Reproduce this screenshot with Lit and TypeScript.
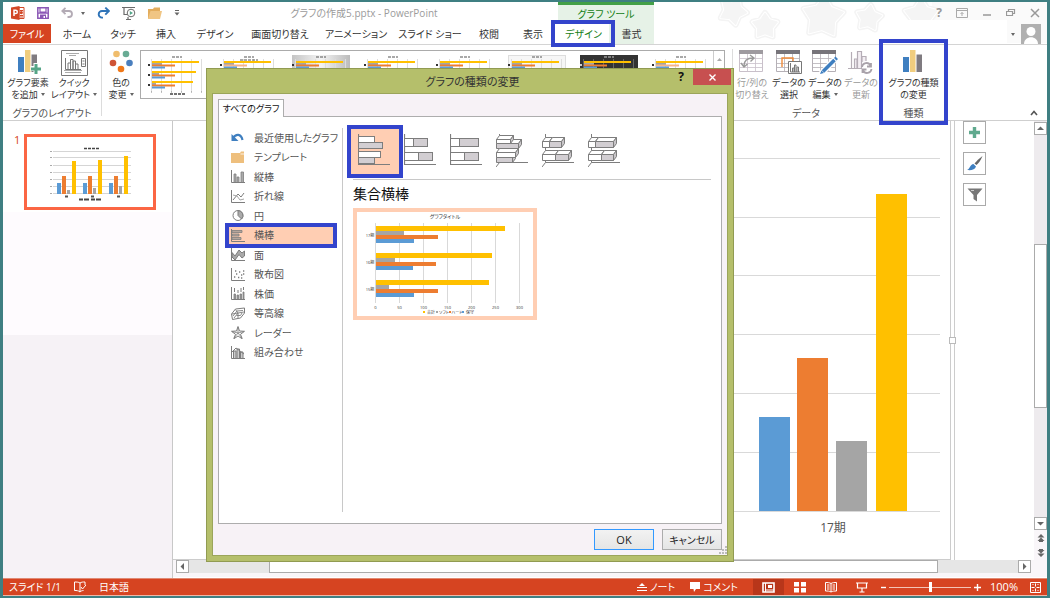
import { LitElement, html, svg, css } from "lit";
import { customElement, state } from "lit/decorators.js";
import { classMap } from "lit/directives/class-map.js";

const BLUE = "#5b9bd5";
const ORANGE = "#ed7d31";
const GRAY = "#a5a5a5";
const GOLD = "#ffc000";
const LINE = "#7d7d7d";

const star = (x: number, y: number, r: number, turn: number) => {
  const pts: string[] = [];
  for (let i = 0; i < 10; i++) {
    const a = ((turn + i * 36) * Math.PI) / 180;
    const q = i % 2 ? r * 0.6 : r;
    pts.push(`${(x + q * Math.sin(a)).toFixed(1)},${(y - q * Math.cos(a)).toFixed(1)}`);
  }
  return svg`<polygon points=${pts.join(" ")} fill="none" stroke="#f4f4f4" stroke-width="6" stroke-linejoin="round"/>
    <polygon points=${pts.join(" ")} fill="#f6f6f6" stroke="#fff" stroke-width="3" stroke-linejoin="round"/>
    <polygon points=${pts.join(" ")} fill="#f5f5f5" stroke="#f5f5f5" stroke-width="1" stroke-linejoin="round"/>`;
};

/* ---------- quick access and window icons ---------- */
const pptIcon = html`<svg width="14" height="14" viewBox="0 0 14 14"><path d="M8 1.5h5v11H8z" fill="#fff" stroke="#d24726"/><path d="M9 4.5h3M9 9.5h3M9 11h3" stroke="#d24726"/><circle cx="10.3" cy="6.6" r="1.6" fill="#d24726"/><path d="M0 1.5 8.5 0v14L0 12.5z" fill="#d24726"/><path d="M3 10V4.2h1.6a1.6 1.6 0 0 1 0 3.4H3" fill="none" stroke="#fff" stroke-width="1.5"/></svg>`;
const saveIcon = html`<svg width="12" height="12" viewBox="0 0 12 12"><path d="M.8.8h10.4v10.4H.8z" fill="#fff" stroke="#8a57b5" stroke-width="1.5"/><path d="M3 1v4h6V1M1 6.2h10" fill="none" stroke="#8a57b5" stroke-width="1.2"/><path d="M3 7.5h6V12H3z" fill="#8a57b5"/><path d="M6.5 9H8v2H6.5z" fill="#fff"/></svg>`;
const undoIcon = html`<svg width="12" height="12" viewBox="0 0 12 12"><path d="M1 4h7a3 3 0 0 1 0 6H6.5M4.5.8 1.2 4l3.3 3.2" fill="none" stroke="#b3abb5" stroke-width="1.8"/></svg>`;
const redoIcon = html`<svg width="13" height="12" viewBox="0 0 13 12"><path d="M11 4H5a3.3 3.3 0 0 0 0 6.6h1M8.3.6 12 4 8.3 7.6" fill="none" stroke="#2f74b8" stroke-width="1.9"/></svg>`;
const showIcon = html`<svg width="14" height="14" viewBox="0 0 14 14"><path d="M0 1.5h13M2 1.5v7h4M6 11v2M4 13.5h5" fill="none" stroke="#6a6a6a" stroke-width="1.2"/><circle cx="9" cy="7" r="3.8" fill="#fff" stroke="#6a6a6a"/><path d="M7.8 5v4L11 7z" fill="#52a588"/></svg>`;
const folderIcon = html`<svg width="14" height="12" viewBox="0 0 14 12"><path d="M0 12V2h5l1-1.5h6V4" fill="#e3ad5d"/><path d="M0 12 2.5 4H14l-2 8z" fill="#f0c583"/></svg>`;
const moreIcon = html`<svg width="6" height="6" viewBox="0 0 6 6"><path d="M1 .5h4" stroke="#666"/><path d="M.5 2.5h5L3 5.5z" fill="#666"/></svg>`;

/* ---------- ribbon icons ---------- */
const barsIcon = (plus: boolean) => html`<svg width="25" height="24" viewBox="0 0 25 24"><path d="M2 7h6v15H2z" fill="#3f7fc0"/><path d="M9 0h5.5v22H9z" fill="#f0cd7e"/><path d="M15.5 4.5H21V22h-5.5z" fill="#7f7b80"/>${plus ? svg`<path d="M20 13v11M14.5 18.5h11" stroke="#fff" stroke-width="5"/><path d="M20 14v10M15 19h10" stroke="#55a587" stroke-width="3"/>` : ""}</svg>`;
const quickIcon = html`<svg width="27" height="26" viewBox="0 0 27 26"><path d="M.5.5h26v25H.5z" fill="#fff" stroke="#777"/><path d="M5 3.5h13M8 5.5h7M4 22.5h16M3 20.5h18" stroke="#aaa"/><path d="M4.5 8v11.5H20M7 19v-6h2.5v6M9.5 19V9.5H12V19M12 19v-8h2.5v8M14.5 19v-5H17v5" fill="none" stroke="#777"/><path d="M20.5 8.5h4v8h-4z" fill="none" stroke="#777"/><path d="M21.5 11h2M21.5 14h2" stroke="#777"/></svg>`;
const colorIcon = html`<svg width="24" height="24" viewBox="0 0 24 24"><circle cx="7.5" cy="4" r="3.3" fill="#f0bd6c"/><circle cx="17" cy="4" r="3.3" fill="#68ab94"/><circle cx="4" cy="13" r="3.3" fill="#cf5436"/><circle cx="20.5" cy="13" r="3.3" fill="#4a7fbe"/><circle cx="12" cy="19" r="3.3" fill="#f07818"/></svg>`;
const gridBase = (c: string, head: string) => svg`<path d="M.5.5h23v21H.5z" fill="#fff" stroke=${c}/><path d="M0 0h24v4H0z" fill=${head}/><path d="M0 8.5h24M0 13.5h24M0 17.5h24M8.5 4v18M16.5 4v18" stroke=${c} stroke-width=".8"/>`;
const swapIcon = html`<svg width="26" height="24" viewBox="0 0 26 24">${gridBase("#c9c0ca", "#9e9a9f")}<path d="M5 16c0-6 3-8 9-8M11 5l4 3-3.5 3.5M2 13l3 4 3.5-3" fill="none" stroke="#999" stroke-width="1.4"/></svg>`;
const selectIcon = html`<svg width="26" height="24" viewBox="0 0 26 24">${gridBase("#b5b0b6", "#77747a")}<path d="M6 17V8h11v4" fill="none" stroke="#ef8b3a" stroke-width="1.4"/><path d="M12.5 11.5h13v12h-13z" fill="#fff" stroke="#777"/><path d="M14.5 13v9H24M16.5 22v-4H18v4M18.5 22v-7H20v7M21 22v-5h1.5v5" fill="none" stroke="#777"/></svg>`;
const editIcon = html`<svg width="26" height="24" viewBox="0 0 26 24">${gridBase("#b5b0b6", "#77747a")}<path d="M9 24 24 8" stroke="#fff" stroke-width="6"/><path d="M11 21.5 22.5 10" stroke="#3f7fc0" stroke-width="3.6"/><path d="m22 8 1.5-1.5L26 9l-1.500 1.500zM9.500 20.500 12 23l-4 1z" fill="#3f7fc0"/></svg>`;
const refreshIcon = html`<svg width="26" height="24" viewBox="0 0 26 24"><path d="M3.5 2v17M0 18.5h14M6.5 18V9H9v9M9.5 18V1.5h4V18M14 12V6.5h4V11" fill="#f3eef3" stroke="#b5adb6" stroke-width="1.2"/><path d="M14 17a4.5 4.5 0 0 1 8.5-1.5M23 13v3.5h-4M23.5 19a4.5 4.5 0 0 1-8.500 1.500M14.500 23v-3.500h4" fill="none" stroke="#a9a2aa" stroke-width="1.8"/></svg>`;

/* ---------- chart type list icons ---------- */
const axis = svg`<path d="M.5 0v12.500H14" fill="none" stroke=${LINE}/>`;
const small = (body: unknown) => html`<svg width="14" height="13" viewBox="0 0 14 13">${body}</svg>`;
const chartTypes: { name: string; icon: unknown }[] = [
  { name: "最近使用したグラフ", icon: small(svg`<path d="M2 7C5 2.500 10 2.500 11.500 9" fill="none" stroke="#3f7fc0" stroke-width="2.200"/><path d="M.5 3v7h7z" fill="#3f7fc0"/>`) },
  { name: "テンプレート", icon: small(svg`<path d="M0 12V2h9l1-1.500h3V12z" fill="#eebf7d"/><path d="M9.500 3H13" stroke="#fff" stroke-width=".8"/>`) },
  { name: "縦棒", icon: small(svg`${axis}<path d="M3 12V4h2v8M6 12V7h2v5M10 12V2h2.500v10" fill="#aaa" stroke=${LINE} stroke-width=".8"/>`) },
  { name: "折れ線", icon: small(svg`${axis}<path d="m2 10 5-6 3 3 3-4" fill="none" stroke=${LINE}/><path d="m2 5 4 1 3 4 4-1" fill="none" stroke="#a5a5a5"/>`) },
  { name: "円", icon: small(svg`<circle cx="7" cy="6.500" r="5" fill="#fff" stroke=${LINE}/><path d="M7 6.500v-5a5 5 0 0 1 3.500 8.500z" fill="#aaa" stroke=${LINE}/>`) },
  { name: "横棒", icon: small(svg`${axis}<path d="M1 1.500h10v2H1zM1 5h7v2H1zM1 8.500h9v2H1z" fill="#b5a59c" stroke=${LINE} stroke-width=".8"/>`) },
  { name: "面", icon: small(svg`<path d="M.5 0v12.500H14" fill="none" stroke=${LINE}/><path d="M1 4.500 4 8l4-6 3 3 2.500-2v5L11 10 8 6.500 4 12 1 9z" fill="#aaa" stroke=${LINE}/>`) },
  { name: "散布図", icon: small(svg`${axis}<path d="M3 9h1.300M5 6h1.300M7 9.500h1.300M8 4h1.300M10 7h1.300M12 3h1.300M4 3h1.300M10 10h1.300M12 6h1.300" stroke=${LINE} stroke-width="1.300"/>`) },
  { name: "株価", icon: small(svg`${axis}<path d="M3 12V7h1.500v5M6 12V8h1.500v4M9 12V7h1.500v5M12 12V5h1v7" fill="#999" stroke=${LINE} stroke-width=".8"/><path d="M3.500 1v4M7 3v3M10 1v4M12.500 0v3" stroke=${LINE}/>`) },
  { name: "等高線", icon: small(svg`<path d="m.5 7 4-5 9-1v5l-4 5-8 1.500z" fill="#fff" stroke=${LINE}/><path d="m2 9 4-5 6-.5M3 11l4-5 6-1M5.500 8.500h4L11 6M1 7l6-1M7 6v5M4.500 2.500 7 6" fill="none" stroke=${LINE} stroke-width=".9"/>`) },
  { name: "レーダー", icon: small(svg`<path d="m7 .5 1.500 4.500 5 .3-4 3 1.700 4.500L7 10l-4.200 2.800L4.500 8.300l-4-3 5-.3z" fill="#fff" stroke=${LINE}/><path d="M7 1v6l6-1.500M7 7l4 5M7 7l-4 5M7 7 1 5.500" fill="none" stroke=${LINE} stroke-width=".8"/>`) },
  { name: "組み合わせ", icon: small(svg`${axis}<path d="M2.500 12V5H5v7M6 12V3h2.500v9M9.500 12V6H12v6" fill="#ccc" stroke=${LINE}/><path d="m1 6 4-4 4 3 4 3" fill="none" stroke=${LINE}/>`) },
];

/* ---------- horizontal bar subtypes ---------- */
const slab = (x: number, y: number, w: number, h: number, fill: string) =>
  svg`<path d=${`M${x} ${y}h${w}v${h}h${-w}z`} fill=${fill} stroke=${LINE}/><path d=${`M${x} ${y}l3-4h${w}l-3 4z`} fill="#fff" stroke=${LINE} stroke-linejoin="round"/><path d=${`M${x + w} ${y}l3-4v${h}l-3 4z`} fill="#c8c5c8" stroke=${LINE} stroke-linejoin="round"/>`;
const rect = (x: number, y: number, w: number, h: number, fill: string) =>
  svg`<rect x=${x} y=${y} width=${w} height=${h} fill=${fill} stroke=${LINE}/>`;
const axes2 = svg`<path d="M.5 0v30.500H32" fill="none" stroke=${LINE} stroke-width="1.200"/>`;
const axes3 = svg`<path d="M3.500 0v28.500H32M3.500 28.500 0 33" fill="none" stroke=${LINE}/>`;
const G = "#d2ced2";
const subtypes: { name: string; body: unknown }[] = [
  { name: "集合横棒", body: svg`${axes2}${rect(0.5, 2.5, 16, 6, "#fff")}${rect(0.5, 8.5, 24, 6, G)}${rect(0.5, 17.5, 22, 6, "#fff")}${rect(0.5, 23.5, 16, 6, G)}` },
  { name: "積み上げ横棒", body: svg`${axes2}${rect(0.5, 4.5, 9, 8, "#fff")}${rect(9.5, 4.5, 14, 8, G)}${rect(0.5, 18.5, 14, 8, "#fff")}${rect(14.5, 18.5, 14, 8, G)}` },
  { name: "100% 積み上げ横棒", body: svg`${axes2}${rect(0.5, 4.5, 9, 8, "#fff")}${rect(9.5, 4.5, 19, 8, G)}${rect(0.5, 18.5, 14, 8, "#fff")}${rect(14.5, 18.5, 14, 8, G)}` },
  { name: "3-D 集合横棒", body: svg`${axes3}${slab(0.5, 9.5, 22, 5, G)}${slab(0.5, 5.5, 14, 4, "#fff")}${slab(0.5, 23.5, 16, 5, G)}${slab(0.5, 18.5, 19, 5, "#fff")}` },
  { name: "3-D 積み上げ横棒", body: svg`${axes3}${slab(0.5, 7.5, 7, 6, "#fff")}${slab(7.5, 7.5, 12, 6, G)}${slab(0.5, 20.5, 13, 6, "#fff")}${slab(13.5, 20.5, 13, 6, G)}` },
  { name: "3-D 100% 積み上げ横棒", body: svg`${axes3}${slab(0.5, 7.5, 7, 6, "#fff")}${slab(7.5, 7.5, 18, 6, G)}${slab(0.5, 20.5, 13, 6, "#fff")}${slab(13.5, 20.5, 12, 6, G)}` },
];

/* ---------- charts ---------- */
const periods = [
  { name: "17期", v: [38, 62, 28, 129] },
  { name: "16期", v: [37, 60, 19, 116] },
  { name: "15期", v: [38, 62, 13, 113] },
];
const colors = [BLUE, ORANGE, GRAY, GOLD];

const preview = html`<svg width="176" height="104" viewBox="0 0 176 104" role="img" aria-label="集合横棒のプレビュー">
  ${[0, 1, 2, 3, 4, 5, 6].map((i) => svg`<path d=${`M${18.5 + i * 24} 11v80`} stroke="#d9d9d9"/><text x=${18.5 + i * 24} y="97" class="tiny">${i * 50}</text>`)}
  ${periods.map((p, i) => svg`<text x="13" y=${25 + i * 27} class="tiny">${p.name}</text>${[3, 2, 1, 0].map((k, n) => svg`<rect x="19" y=${14 + i * 27 + n * 4 + (n ? 1 : 0)} width=${p.v[k]} height=${n ? 4 : 5} fill=${colors[k]}/>`)}`)}
  <text x="88" y="6" class="tiny mid">グラフタイトル</text>
  ${["合計", "ソフト", "ハード", "保守"].map((t, i) => svg`<rect x=${66 + i * 13} y="99" width="2" height="2" fill=${[GOLD, GRAY, ORANGE, BLUE][i]}/><text x=${74 + i * 13} y="102" class="tiny">${t}</text>`)}
</svg>`;

const slideThumb = html`<svg width="126" height="70" viewBox="0 0 126 70" aria-hidden="true">
  ${[15, 21, 29, 36, 43, 50, 57].map((y) => svg`<path d=${`M26 ${y - 0.5}h78`} stroke="#d5d5d5"/><path d=${`M23 ${y - 0.5}h2`} stroke="#aaa"/>`)}
  <path d="M57 11.500h16" stroke="#444" stroke-width="1.500" stroke-dasharray="3 1"/>
  ${[0, 1, 2].map((i) => svg`<rect x=${30 + i * 26} y=${46} width="4" height="11" fill=${BLUE}/><rect x=${35 + i * 26} y="39" width="4" height="18" fill=${ORANGE}/><rect x=${40 + i * 26} y=${53 - i * 2} width="3" height=${4 + i * 2} fill=${GRAY}/><rect x=${45 + i * 26} y=${[24, 23, 19][i]} width="4" height=${[33, 34, 38][i]} fill=${GOLD}/><path d=${`M${38 + i * 26} 59.500h3`} stroke="#555" stroke-width="2"/>`)}
  <path d="M52 62.500h24" stroke="#444" stroke-width="2" stroke-dasharray="4 1 5 2"/>
</svg>`;

const bigBars = [
  { x: 25, h: 94, c: BLUE },
  { x: 63, h: 153, c: ORANGE },
  { x: 102, h: 70, c: GRAY },
  { x: 142, h: 317, c: GOLD },
];

const styleThumb = (i: number) => {
  const dark = i === 6;
  return html`<svg width="58" height="46" viewBox="0 0 58 46">
    ${i === 2 ? svg`<defs><linearGradient id="fade"><stop offset="0" stop-color="#c4c4c4"/><stop offset=".5" stop-color="#f4f4f4"/><stop offset="1" stop-color="#bbb"/></linearGradient></defs><rect y="3" width="58" height="43" fill="url(#fade)"/>` : ""}
    ${dark ? svg`<rect y="3" width="58" height="43" fill="#333"/>` : ""}
    ${i === 5 ? svg`<rect x=".5" y="3.500" width="57" height="43" fill="#f6f6f6" stroke="#ddd"/>` : ""}
    ${[0, 1, 2, 3, 4, 5].map((n) => svg`<path d=${`M${3.5 + n * 10} 7v33`} stroke=${dark ? "#666" : "#ddd"}/>`)}
    <path d="M24 5h10" stroke=${dark ? "#ccc" : "#555"} stroke-width="1.200" stroke-dasharray="3 1"/>
    ${i === 1 ? svg`<path d="M20 8h18" stroke="#555" stroke-dasharray="3 1"/>` : ""}
    ${[0, 1, 2].map((r) => svg`<path d=${`M4 ${9 + r * 10 + 1}h${47 - r * 3}`} stroke="#ffc000" stroke-width="2"/><path d=${`M4 ${9 + r * 10 + 3}h${10 - r * 3}`} stroke="#a5a5a5" stroke-width="2"/><path d=${`M4 ${9 + r * 10 + 4.5}h23`} stroke=${i === 1 || i === 7 ? "#f7b48a" : ORANGE} stroke-width="2"/><path d=${`M4 ${9 + r * 10 + 6.5}h13`} stroke=${BLUE} stroke-width="2"/><path d=${`M0 ${9 + r * 10 + 4}h2`} stroke=${dark ? "#ccc" : "#333"} stroke-width="2"/>`)}
    <path d="M22 42h16" stroke="#444" stroke-width="1.500" stroke-dasharray="3 1"/><path d="M3 40h52" stroke="#888" stroke-dasharray="1 9"/>
  </svg>`;
};

@customElement("app-root")
export class AppRoot extends LitElement {
  @state() private picked = 5;
  @state() private subtype = 0;

  static styles = css`
    :host {
      display: block;
      height: 100vh;
      min-height: 560px;
      color: #444;
      font: 10px/12px "Open Sans", "Noto Sans CJK JP", sans-serif;
      font-feature-settings: "palt";
    }
    * { box-sizing: border-box; }
    button { font: inherit; font-feature-settings: inherit; color: inherit; background: none; border: 0; padding: 0; margin: 0; white-space: nowrap; }
    svg { display: block; flex: none; }
    .window { position: relative; height: 100%; display: flex; flex-direction: column; background: #fff; border: 2px solid #3f7f82; border-left-width: 3px; border-right-width: 3px; overflow: hidden; }

    .head { position: relative; display: grid; grid-template-columns: 555px 96px 1fr; grid-template-rows: 22px 20px; border-bottom: 1px solid #d4d4d4; }
    .stars { position: absolute; top: 0; right: 0; }
    .bar { display: flex; align-items: center; position: relative; }
    .qat { display: flex; align-items: center; padding-left: 8px; width: 167px; gap: 12px; }
    .qat .undo { display: flex; align-items: center; gap: 5px; }
    .title { flex: 1; text-align: center; color: #9b9b9b; }
    .wincontrols { display: flex; align-items: center; justify-content: flex-end; gap: 14px; padding-right: 7px; color: #999; position: relative; font-weight: 700; font-size: 12px; }
    .tabs { grid-column: 1; grid-row: 2; display: flex; position: relative; }
    .tabs button { height: 20px; color: #333; }
    .tabs .file { background: #d64421; color: #fff; width: 48px; height: 19px; }
    .w40 { width: 40px; } .w44 { width: 44px; } .w46 { width: 46px; } .w52 { width: 52px; } .w74 { width: 74px; } .w78 { width: 78px; }
    .context { grid-column: 2; grid-row: 1 / 3; background: #e6f2e7; border-top: 3px solid #43a047; display: grid; grid-template-rows: 19px 20px; grid-template-columns: 51px 45px; text-align: center; color: #158015; z-index: 2; }
    .context .name { grid-column: 1 / 3; line-height: 19px; }
    .context .on { position: relative; background: #fff; color: #158015; }
    .context .on::after { content: ""; position: absolute; inset: -4px -6px -3px -7px; border: 4px solid #3344cc; }
    .context .plain { color: #333; }
    .account { grid-column: 3; grid-row: 2; display: flex; justify-content: flex-end; align-items: center; gap: 6px; padding-right: 6px; position: relative; }
    .tri { display: inline-block; border: 2px solid transparent; border-top: 3px solid #666; border-bottom: 0; margin-left: 3px; vertical-align: 2px; }

    .ribbon { display: flex; height: 76px; border-bottom: 1px solid #cfcfcf; }
    .group { display: flex; flex-direction: column; padding-top: 5px; }
    .tools { display: flex; height: 56px; font-size: 9px; }
    .tools button { display: grid; grid-template-columns: 100%; grid-template-rows: 27px 12px 12px; justify-items: center; color: #333; }
    .tools .off { color: #999; }
    .caption { text-align: center; color: #555; line-height: 14px; padding-top: 1px; }
    .rule { width: 1px; background: #dcdcdc; margin: 4px 0; }
    .b50 { width: 50px; } .b48 { width: 48px; padding-right: 6px; } .b36 { width: 36px; } .b38 { width: 38px; } .b69 { width: 69px; }
    .gallery { flex: 1; margin: 5px 7px 0 0; height: 49px; border: 1px solid #ababab; display: flex; overflow: hidden; min-width: 0; }
    .styles { flex: 1; display: flex; gap: 14px; padding-left: 7px; overflow: hidden; }
    .styles button { flex: none; }
    .gscroll { width: 11px; border-left: 1px solid #ccc; color: #999; display: grid; justify-items: center; padding-top: 7px; }
    .kind { position: relative; width: 69px; }
    .kind::after { content: ""; position: absolute; inset: -6px 0 -5px; border: 4px solid #3344cc; z-index: 3; }
    .tail { width: 99px; display: flex; justify-content: flex-end; align-items: flex-end; padding: 0 9px 4px; }

    .work { flex: 1; display: flex; min-height: 0; }
    .slides { width: 170px; border-right: 1px solid #c8c8c8; display: flex; align-items: flex-start; gap: 4px; padding: 13px 0 0 11px; background: linear-gradient(#fff 91px, #fefbfe 91px, #fefbfe 214px, #f6f2f6 214px); color: #d64421; font-size: 11px; }
    .slides .shot { border: 3px solid #fb6644; background: #fff; }
    .editor { flex: 1; display: flex; flex-direction: column; min-width: 0; background: #f9f6f9; border-bottom: 1px solid #fff; }
    .upper { flex: 1; display: flex; min-height: 0; }
    .canvas { flex: 1; background: #fff; display: flex; flex-direction: column; align-items: flex-end; padding: 37px 10px 0 0; border-bottom: 1px solid #ccc; min-width: 0; overflow: hidden; }
    .canvas .label { width: 206px; text-align: center; font-size: 12px; line-height: 16px; padding: 8px 8px 0 0; color: #555; }
    .edge { position: relative; width: 5px; border: 1px solid #ccc; border-width: 0 1px; background: #fff; }
    .edge i { position: absolute; left: -2px; top: 216px; width: 7px; height: 7px; border: 1px solid #bbb; background: #fff; }
    .side { width: 79px; background: #fff; padding-left: 8px; display: flex; flex-direction: column; gap: 8px; }
    .side button { width: 23px; height: 23px; border: 1px solid #aaa; display: grid; place-items: center; background: #fff; }
    .vbar { width: 13px; display: flex; flex-direction: column; background: #eeebee; padding-top: 1px; margin-bottom: -16px; }
    .arrow { width: 13px; height: 13px; border: 1px solid #ababab; background: #fff; display: grid; place-items: center; flex: none; }
    .space { flex: 110; }
    .thumb { flex: 162; border: 1px solid #ababab; background: #fff; }
    .paging { height: 46px; display: grid; justify-items: center; align-content: start; gap: 7px; padding-top: 4px; background: #f9f6f9; flex: none; }
    .hbar { display: flex; height: 13px; margin: 0 16px 4px 3px; background: #e6e6e6; }
    .hbar .pad1 { flex: 80; } .hbar .bar1 { flex: 671; background: #fff; border: 1px solid #ababab; } .hbar .pad2 { flex: 80; }

    .status { display: flex; align-items: center; height: 18px; background: #d64421; color: #fff; border-bottom: 1px solid #f0b6a6; padding: 0 6px; flex: none; border-top: 1px solid #e08a74; }
    .status .left { display: flex; gap: 13px; flex: 1; align-items: center; }
    .status .note { display: flex; align-items: center; gap: 3px; margin-right: 15px; }
    .views { display: flex; }
    .views button { width: 31px; height: 16px; display: grid; place-items: center; }
    .views .on { background: #b8361a; }
    .zoom { display: flex; align-items: center; gap: 3px; margin-left: 3px; }
    .zoom button { width: 6px; display: grid; place-items: center; }
    .zoom input { appearance: none; width: 82px; height: 12px; margin: 0; background: linear-gradient(#f4c4b6, #f4c4b6) center / 100% 1px no-repeat; }
    .zoom input::-webkit-slider-thumb { appearance: none; width: 3px; height: 10px; background: #fff; }
    .pct { width: 38px; text-align: right; margin-right: 12px; font-size: 11px; }

    .dialog { position: absolute; left: 203px; top: 66px; width: 528px; height: 494px; background: #b5bf6b; border: 1px solid #919b52; padding: 0 5px 5px; display: flex; flex-direction: column; z-index: 1; }
    .dtitle { display: grid; grid-template-columns: 76px 1fr 36px 38px; height: 24px; margin-right: -3px; flex: none; }
    .dtitle h1 { margin: 0; font-size: 11px; font-weight: 400; line-height: 25px; text-align: center; color: #333; }
    .dtitle .help { font-weight: 700; font-size: 12px; height: 16px; color: #111; padding-left: 12px; }
    .dtitle .close { height: 16px; background: #c75050; display: grid; place-items: center; }
    .dbody { flex: 1; background: #f7f2f6; border: 1px solid #9ba55a; display: flex; flex-direction: column; padding: 5px; min-height: 0; }
    .dtab { align-self: flex-start; background: #fff; border: 1px solid #adadad; border-bottom: 0; width: 66px; height: 18px; margin-bottom: -1px; position: relative; color: #111; font-size: 9px; }
    .panel { flex: 1; background: #fff; border: 1px solid #adadad; display: flex; padding: 11px 10px 11px 6px; min-height: 0; }
    .types { width: 118px; border-right: 1px solid #c8c8c8; flex: none; }
    .types nav { display: grid; grid-auto-rows: 1fr; height: 234px; }
    .types button { position: relative; display: flex; align-items: center; gap: 9px; padding-left: 6px; width: 112px; color: #555; }
    .types .sel { background: linear-gradient(#ffceb3, #ffceb3) 4px 50% / 104px 100% no-repeat; }
    .types .sel::after { content: ""; position: absolute; inset: -3px 0; border: 4px solid #3344cc; }
    .detail { flex: 1; padding-left: 10px; min-width: 0; }
    .subs { display: flex; height: 52px; border-bottom: 1px solid #c8c8c8; }
    .subs button { position: relative; width: 46px; padding: 6px 0 0 5px; display: grid; align-items: start; }
    .subs .sel::before { content: ""; position: absolute; inset: -3px -4px 1px -6px; border: 4px solid #3344cc; background: #ffceb3; }
    .subs svg { position: relative; }
    h2 { margin: 0; font-size: 14px; line-height: 28px; font-weight: 400; color: #111; }
    .pre { border: 4px solid #ffceb3; width: 184px; background: #fff; }
    .tiny { font-size: 4px; text-anchor: middle; fill: #333; }
    .mid { font-size: 5px; }
    .actions { display: flex; justify-content: flex-end; gap: 8px; padding-top: 5px; height: 26px; font-size: 11px; }
    .actions button { width: 60px; background: linear-gradient(#f2f2f2, #e5e5e5); border: 1px solid #acacac; color: #222; height: 21px; font-size: 10px; }
    .actions .ok { border-color: #3399ff; font-size: 11px; }
    .grip { position: absolute; right: 6px; bottom: 7px; }
  `;

  private tool(cls: string, icon: unknown, a: string, b: string, drop = false) {
    return html`<button class=${cls}>${icon}<span>${a}</span><span>${b}${drop ? html`<i class="tri"></i>` : ""}</span></button>`;
  }

  private arrow(label: string, d: string) {
    return html`<button class="arrow" aria-label=${label}><svg width="7" height="7" viewBox="0 0 7 7"><path d=${d} fill="#666"/></svg></button>`;
  }

  render() {
    return html`<div class="window">
      <header class="head">
        <svg class="stars" width="340" height="41" viewBox="0 0 340 41" aria-hidden="true"><path d="M225 0h115v41h-45V18h-70z" fill="#fafafa"/>
          ${star(26, 9, 14, 25)}${star(58, 24, 13, 0)}${star(116, 15, 21, 5)}${star(162, 16, 13, 8)}${star(214, 14, 17, 0)}
          <path d="M200 18h100v23H200z" fill="#fff"/></svg>
        <div class="bar">
          <div class="qat">${pptIcon}${saveIcon}<span class="undo">${undoIcon}<i class="tri"></i></span>${redoIcon}${showIcon}${folderIcon}${moreIcon}</div>
          <div class="title">グラフの作成5.pptx - PowerPoint</div>
        </div>
        <div class="tabs">
          <button class="file">ファイル</button><button class="w52">ホーム</button><button class="w40">タッチ</button><button class="w46">挿入</button><button class="w52">デザイン</button><button class="w78">画面切り替え</button><button class="w74">アニメーション</button><button class="w74">スライド ショー</button><button class="w44">校閲</button><button class="w44">表示</button>
        </div>
        <div class="context"><span class="name">グラフ ツール</span><button class="on">デザイン</button><button class="plain">書式</button></div>
        <div class="wincontrols"><span>?</span>
          <svg width="12" height="10" viewBox="0 0 12 10"><path d="M.5.5h11v9H.5zM.5 2.500h11M6 8V4.500M4.500 6 6 4.500 7.500 6" fill="none" stroke="#aaa"/></svg>
          <svg width="10" height="10" viewBox="0 0 10 10"><path d="M1 7h8" stroke="#999" stroke-width="1.500"/></svg>
          <svg width="10" height="10" viewBox="0 0 10 10"><path d="M2.500 3V1.500h6v4H7M.5 3.500h6v4h-6z" fill="none" stroke="#999" stroke-width="1.200"/></svg>
          <svg width="10" height="10" viewBox="0 0 10 10"><path d="m1 1 8 8M9 1 1 9" stroke="#999" stroke-width="1.500"/></svg>
        </div>
        <div class="account"><i class="tri"></i><svg width="20" height="20" viewBox="0 0 20 20"><path d="M0 0h20v20H0z" fill="#b0b0b0"/><circle cx="10" cy="7.500" r="4.500" fill="#fff"/><path d="M3 20c0-9 14-9 14 0z" fill="#fff"/></svg></div>
      </header>

      <section class="ribbon">
        <div class="group">
          <div class="tools">${this.tool("b50", barsIcon(true), "グラフ要素", "を追加", true)}${this.tool("b48", quickIcon, "クイック", "レイアウト", true)}</div>
          <div class="caption">グラフのレイアウト</div>
        </div>
        <div class="rule"></div>
        <div class="group"><div class="tools">${this.tool("b38", colorIcon, "色の", "変更", true)}</div></div>
        <div class="gallery">
          <div class="styles">${[0, 1, 2, 3, 4, 5, 6, 7].map((i) => html`<button aria-label=${`スタイル ${i + 1}`}>${styleThumb(i)}</button>`)}</div>
          <button class="gscroll" aria-label="上へ"><svg width="5" height="3" viewBox="0 0 5 3"><path d="M0 3h5L2.500 0z" fill="#aaa"/></svg></button>
        </div>
        <div class="rule"></div>
        <div class="group">
          <div class="tools">${this.tool("b38 off", swapIcon, "行/列の", "切り替え")}${this.tool("b36", selectIcon, "データの", "選択")}${this.tool("b36", editIcon, "データの", "編集", true)}${this.tool("b36 off", refreshIcon, "データの", "更新")}</div>
          <div class="caption">データ</div>
        </div>
        <div class="group kind">
          <div class="tools">${this.tool("b69", barsIcon(false), "グラフの種類", "の変更")}</div>
          <div class="caption">種類</div>
        </div>
        <div class="tail"><svg width="8" height="6" viewBox="0 0 8 6"><path d="m1 5 3-3.500L7 5" fill="none" stroke="#555" stroke-width="1.600"/></svg></div>
      </section>

      <main class="work">
        <aside class="slides"><span>1</span><button class="shot" aria-label="スライド 1">${slideThumb}</button></aside>
        <div class="editor">
          <div class="upper">
            <div class="canvas">
              <svg width="206" height="354" viewBox="0 0 206 354" role="img" aria-label="17期 のグラフ">
                ${[0, 59, 117, 176, 235, 294, 353].map((y) => svg`<path d=${`M0 ${y + 0.5}h206`} stroke="#d9d9d9"/>`)}
                ${bigBars.map((b) => svg`<rect x=${b.x} y=${353 - b.h} width="31" height=${b.h} fill=${b.c}/>`)}
              </svg>
              <div class="label">17期</div>
            </div>
            <div class="edge"><i></i></div>
            <div class="side">
              <button aria-label="グラフ要素"><svg width="13" height="13" viewBox="0 0 13 13"><path d="M6.500 1v11M1 6.500h11" stroke="#60a98e" stroke-width="3.400"/></svg></button>
              <button aria-label="グラフスタイル"><svg width="16" height="16" viewBox="0 0 16 16"><path d="M15.500 0c-2 5-4 7-6 9L7.500 7.500C9.500 5 12 2.500 15.500 0z" fill="#666"/><path d="M6.500 8 9 10.500C8 14 4 14.500 0 14c3-1 3-5.500 6.500-6z" fill="#3f7fc0"/></svg></button>
              <button aria-label="グラフフィルター"><svg width="16" height="14" viewBox="0 0 16 14"><path d="M.5.5h15L10 7v6.500L6.500 11V7z" fill="#777"/><path d="M4 2.500h3" stroke="#ccc"/></svg></button>
            </div>
            <div class="vbar">
              ${this.arrow("上へ", "M0 5h7L3.500 1.500z")}<div class="space"></div><div class="thumb"></div><div class="space"></div>${this.arrow("下へ", "M0 2h7L3.500 5.500z")}
              <div class="paging">
                <svg width="8" height="8" viewBox="0 0 8 8"><path d="M4 0 7.500 3.500h-7zM4 3.500 7.500 7h-7z" fill="#666"/><path d="M2 7.500h4" stroke="#666"/></svg>
                <svg width="8" height="8" viewBox="0 0 8 8"><path d="M4 8 7.500 4.500h-7zM4 4.500 7.500 1h-7z" fill="#666"/><path d="M2 .5h4" stroke="#666"/></svg>
              </div>
            </div>
          </div>
          <div class="hbar">${this.arrow("左へ", "M5 0v7L1.500 3.500z")}<div class="pad1"></div><div class="bar1"></div><div class="pad2"></div>${this.arrow("右へ", "M2 0v7l3.500-3.500z")}</div>
        </div>
      </main>

      <footer class="status">
        <div class="left"><span>スライド 1/1</span><svg width="12" height="12" viewBox="0 0 12 12"><path d="M6 2v9M6 2C4.500 1 2.500 1 .5 1v8.500c2 0 4 0 5.500 1.500 1-1 2-1.500 3.500-1.500M6 2c1.500-1 3-1 5-1v3M7 6l1.500 2L12 4" fill="none" stroke="#fff"/></svg><span>日本語</span></div>
        <button class="note"><svg width="10" height="9" viewBox="0 0 10 9"><path d="M0 4.500h10M0 7.500h10" stroke="#fff"/><path d="M2 3h6L5 0z" fill="#fff"/></svg>ノート</button>
        <button class="note"><svg width="10" height="10" viewBox="0 0 10 10"><path d="M0 0h10v7H6L4 10 3.500 7H0z" fill="#fff"/></svg>コメント</button>
        <div class="views">
          <button class="on" aria-label="標準"><svg width="13" height="11" viewBox="0 0 13 11"><path d="M1 1h11v9H1z" fill="none" stroke="#fff" stroke-width="1.600"/><path d="M3.500 1v9M4 8h8" stroke="#fff"/><path d="M6 3h4v3H6z" fill="#fff"/></svg></button>
          <button aria-label="スライド一覧"><svg width="12" height="11" viewBox="0 0 12 11"><path d="M0 0h5v4.500H0zM7 0h5v4.500H7zM0 6h5v4.500H0zM7 6h5v4.500H7z" fill="#fff"/></svg></button>
          <button aria-label="閲覧表示"><svg width="12" height="11" viewBox="0 0 12 11"><path d="M6 1.500C4.500.5 2.500.5.5.5v8.500c2 0 4 0 5.500 1 1.500-1 3.500-1 5.500-1V.5c-2 0-4 0-5.500 1zM6 1.500V10M2 3h2.500M2 5h2.500M2 7h2.500M7.500 3H10M7.500 5H10M7.500 7H10" fill="none" stroke="#fff"/></svg></button>
          <button aria-label="スライドショー"><svg width="12" height="11" viewBox="0 0 12 11"><path d="M0 1h12M1.500 1v5h9V1M6 6v4M3.500 10h5" fill="none" stroke="#fff" stroke-width="1.200"/></svg></button>
        </div>
        <div class="zoom"><button aria-label="縮小"><svg width="5" height="7" viewBox="0 0 5 7"><path d="M0 3.500h5" stroke="#fff" stroke-width="1.400"/></svg></button><input type="range" aria-label="ズーム" min="0" max="100" value="50"><button aria-label="拡大"><svg width="7" height="7" viewBox="0 0 7 7"><path d="M0 3.500h7M3.500 0v7" stroke="#fff" stroke-width="1.400"/></svg></button></div>
        <span class="pct">100%</span>
        <svg width="11" height="11" viewBox="0 0 11 11"><path d="M.5.500h10v10H.5z" fill="none" stroke="#fff"/><path d="M5.500 1.500v3M5.500 6.500v3M1.500 5.500h3M6.500 5.500h3" stroke="#fff"/><path d="M2.500 2.500h1M7.500 2.500h1M2.500 8.500h1M7.500 8.500h1" stroke="#fff"/></svg>
      </footer>

      <section class="dialog" role="dialog" aria-labelledby="dlg">
        <div class="dtitle"><span></span><h1 id="dlg">グラフの種類の変更</h1><button class="help">?</button><button class="close" aria-label="閉じる"><svg width="7" height="7" viewBox="0 0 7 7"><path d="m.5.5 6 6M6.500.5l-6 6" stroke="#fff" stroke-width="1.400"/></svg></button></div>
        <div class="dbody">
          <button class="dtab">すべてのグラフ</button>
          <div class="panel">
            <div class="types"><nav>${chartTypes.map((t, i) => html`<button class=${classMap({ sel: i === this.picked })} @click=${() => (this.picked = i)}>${t.icon}<span>${t.name}</span></button>`)}</nav></div>
            <div class="detail">
              <div class="subs">${subtypes.map((s, i) => html`<button class=${classMap({ sel: i === this.subtype })} aria-label=${s.name} @click=${() => (this.subtype = i)}><svg width="33" height="34" viewBox="0 0 33 34">${s.body}</svg></button>`)}</div>
              <h2>${subtypes[this.subtype].name}</h2>
              <div class="pre">${preview}</div>
            </div>
          </div>
          <div class="actions"><button class="ok">OK</button><button>キャンセル</button></div>
        </div>
        <svg class="grip" width="8" height="8" viewBox="0 0 8 8"><path d="M6 0h2v2H6zM6 3h2v2H6zM6 6h2v2H6zM3 3h2v2H3zM3 6h2v2H3zM0 6h2v2H0z" fill="#bbb"/></svg>
      </section>
    </div>`;
  }
}
